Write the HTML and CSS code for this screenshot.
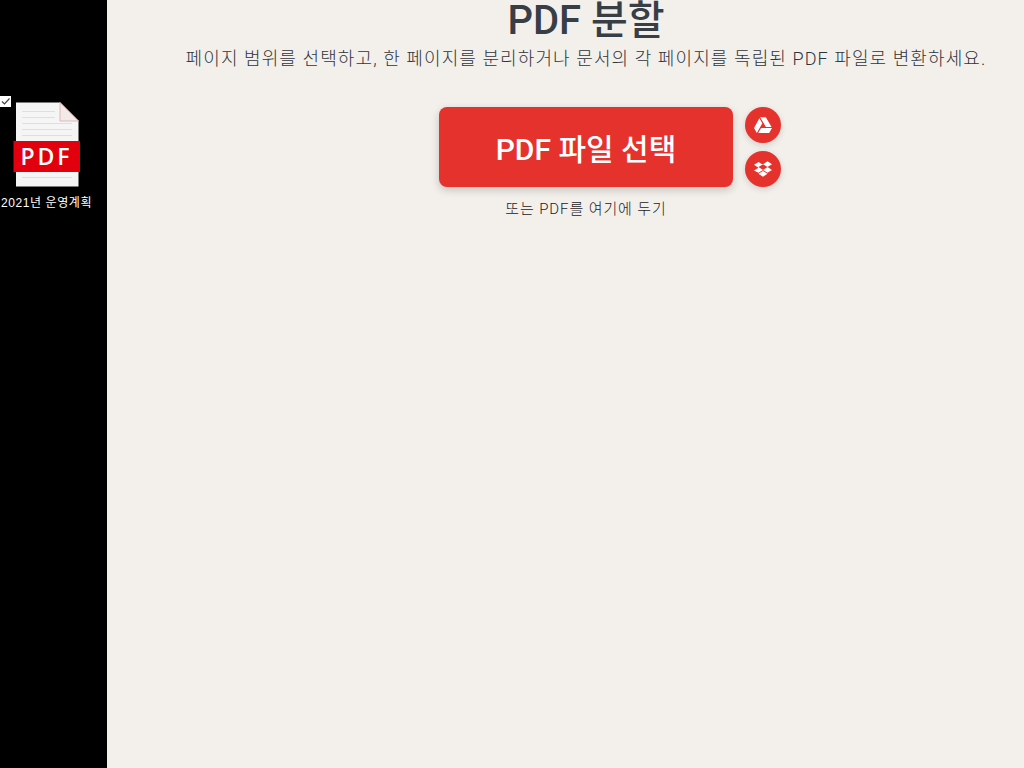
FILE: index.html
```html
<!DOCTYPE html>
<html lang="ko">
    <head>
        <title>PDF 분할</title>
        <link rel="stylesheet" href="styles.css">
    </head>
    <body>
        <aside class="sidebar">
            <div class="file">
                <span class="check">
                    <svg width="11" height="11" viewBox="0 0 11 11"><path d="M2 5.5 L4.5 8 L9.5 2.5" fill="none" stroke="#444" stroke-width="1.2"/></svg>
                </span>
                <svg class="file-icon" width="68" height="86" viewBox="0 0 68 86">
                    <path d="M3 0.5 H47 L65.5 19 V84.5 H3 Z" fill="#f6f5f5"/>
                    <path d="M47 0.5 V19 H65.5 Z" fill="#f3e9e7" stroke="#dcb9b9" stroke-width="1"/>
                    <g stroke="#dfdfe2" stroke-width="1">
                        <path d="M9 9.5 H42"/>
                        <path d="M9 15.5 H42"/>
                        <path d="M9 21.5 H59"/>
                        <path d="M9 27.5 H59"/>
                        <path d="M9 33.5 H59"/>
                        <path d="M9 75.5 H59"/>
                    </g>
                    <rect x="0.5" y="39" width="66.5" height="31" fill="#e2000f"/>
                </svg>
                <span class="file-badge">PDF</span>
                <p class="file-name">2021년 운영계획</p>
            </div>
        </aside>
        <main class="content">
            <h1>PDF 분할</h1>
            <p class="intro">페이지 범위를 선택하고, 한 페이지를 분리하거나 문서의 각 페이지를 독립된 PDF 파일로 변환하세요.</p>
            <div class="picker">
                <button type="button" class="pick-btn">PDF 파일 선택</button>
                <div class="clouds">
                    <a class="cloud" href="#">
                        <svg width="18" height="18" viewBox="0 0 512 512"><path d="M339 314.9L175.4 32h161.2l163.6 282.9H339zm-137.5 23.6L120.9 480h310.5L512 338.5H201.5zM154.1 67.4L0 338.2 80.6 480 237 208.8l-82.9-141.4z" fill="#fff"/></svg>
                    </a>
                    <a class="cloud" href="#">
                        <svg width="18" height="18" viewBox="0 0 528 512"><path d="M264.4 116.3l-132 84.3 132 84.3-132 84.3L0 300.7l132.3-84.3L0 132 132.3 47.7 264.4 132zM131.6 396.7l132-84.3 132 84.3-132 84.3-132-84.3zM264.4 284.9l132-84.3-132-84.3L396.3 32 528 116.3l-131.7 84.3L528 285l-131.7 84.3-131.9-84.4z" fill="#fff"/></svg>
                    </a>
                </div>
            </div>
            <p class="drop-hint">또는 PDF를 여기에 두기</p>
        </main>
    </body>
</html>
```

FILE: styles.css
```css
html,
body {
    height: 100%;
}

body {
    margin: 0;
    display: flex;
    height: 768px;
    overflow: hidden;
    background-color: #f3f0ec;
    font-family: Roboto, "Noto Sans CJK KR", sans-serif;
    color: #383e45;
}

.sidebar {
    width: 107px;
    flex-shrink: 0;
    background-color: #000;
    padding-top: 96px;
    box-sizing: border-box;
}

.file {
    position: relative;
    width: 93px;
    padding-top: 6px;
    text-align: center;
}

.check {
    position: absolute;
    left: 0;
    top: 0;
    width: 11px;
    height: 11px;
    background-color: #fff;
    display: flex;
}

.file-icon {
    display: block;
    margin-left: 13px;
}

.file-badge {
    position: absolute;
    left: 13px;
    top: 45px;
    width: 67px;
    line-height: 31px;
    color: #fff;
    font-family: "Open Sans", sans-serif;
    font-size: 23px;
    font-weight: 600;
    letter-spacing: 3px;
    text-align: center;
}

.file-name {
    margin: 7px 0 0;
    color: #fff;
    font-family: "Liberation Sans", "Noto Sans CJK KR", sans-serif;
    font-size: 12px;
    letter-spacing: 0.6px;
    line-height: 17px;
    white-space: nowrap;
}

.content {
    flex: 1;
    padding-left: 41px;
    text-align: center;
}

h1 {
    margin: 0 0 7px;
    font-size: 40px;
    font-weight: 500;
    line-height: 42px;
}

.intro {
    margin: 0;
    color: #2f343a;
    font-size: 18px;
    font-weight: 300;
    letter-spacing: 1.1px;
    line-height: 20px;
}

.picker {
    display: grid;
    grid-template-columns: 1fr 294px 1fr;
    column-gap: 12px;
    margin-top: 38px;
}

.pick-btn {
    grid-column: 2;
    height: 80px;
    border: 0;
    border-radius: 8px;
    background-color: #e5322d;
    color: #fff;
    font-family: inherit;
    font-size: 30px;
    font-weight: 500;
    box-shadow: 0 3px 8px rgba(0, 0, 0, 0.2);
}

.clouds {
    display: flex;
    flex-direction: column;
    gap: 8px;
}

.cloud {
    display: flex;
    align-items: center;
    justify-content: center;
    width: 36px;
    height: 36px;
    border-radius: 50%;
    background-color: #e5322d;
    box-shadow: 0 2px 6px rgba(0, 0, 0, 0.15);
}

.drop-hint {
    margin: 13px 0 0;
    font-size: 15px;
    font-weight: 300;
    letter-spacing: 0.9px;
    line-height: 18px;
    color: #1d2024;
}
```
